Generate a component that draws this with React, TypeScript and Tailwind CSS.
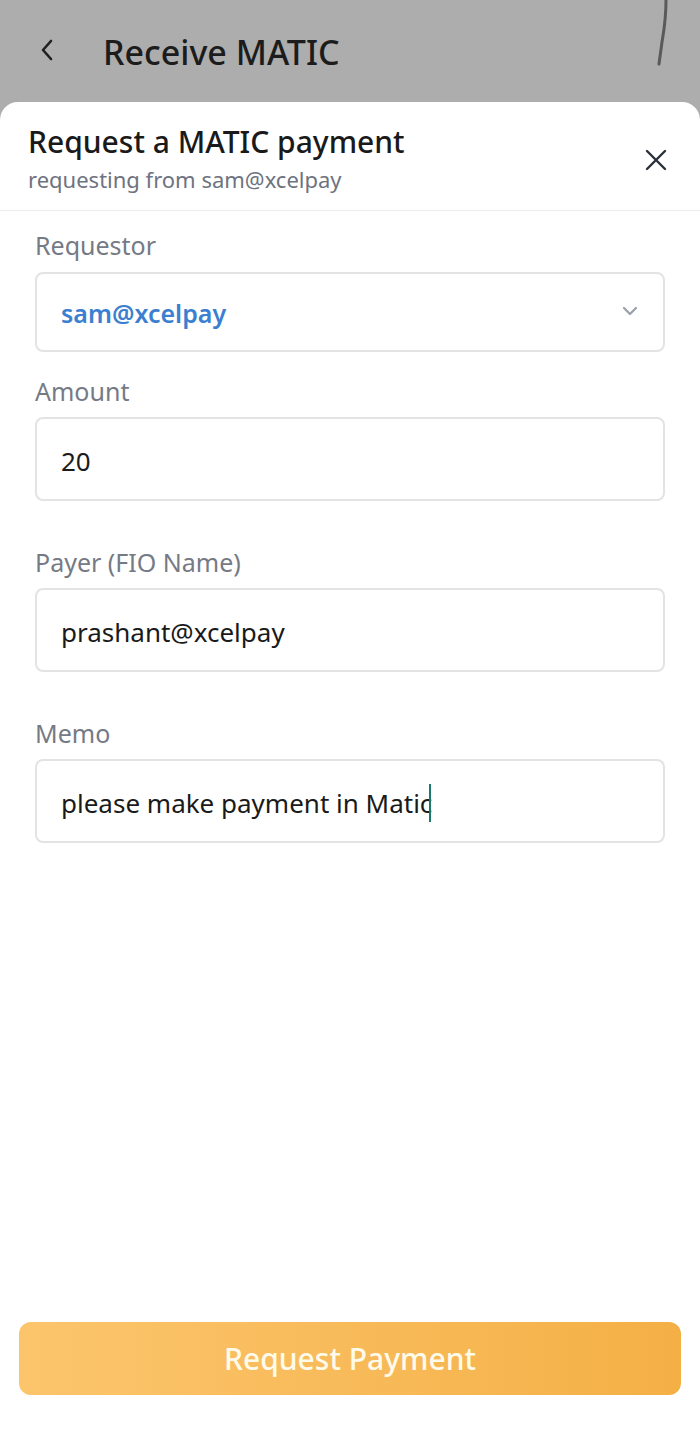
import React from 'react'

const fields = [
  { label: 'Amount', value: '20', mt: 'mt-[36px]' },
  { label: 'Payer (FIO Name)', value: 'prashant@xcelpay', mt: 'mt-[58px]' },
  { label: 'Memo', value: 'please make payment in Matic', mt: 'mt-[58px]', caret: true },
]

const App = () => {
  return (
    <div className="w-[700px] h-[1439px] bg-[#adadad] flex flex-col" style={{ fontFamily: '"Noto Sans", Lato, sans-serif' }}>
      {/* dimmed page behind the sheet */}
      <div className="h-[102px] flex items-center px-9 relative shrink-0">
        <svg width="22" height="30" viewBox="0 0 22 30" className="mt-[-2px]">
          <path d="M15 6 L7 15 L15 24" fill="none" stroke="#1f1f1f" strokeWidth="2.6" strokeLinecap="round" strokeLinejoin="round" />
        </svg>
        <h1 className="ml-[45px] text-[34px] font-medium text-[#1c1c1c] leading-[40px] mt-[2px]">Receive MATIC</h1>
        <svg width="20" height="70" viewBox="0 0 20 70" className="absolute right-[28px] top-0">
          <path d="M14 0 C14 20 12 30 10 42 C9 50 8 56 7 64" fill="none" stroke="#5a5a5a" strokeWidth="3" strokeLinecap="round" />
        </svg>
      </div>

      {/* bottom sheet */}
      <div className="flex-1 bg-white rounded-t-[18px] flex flex-col">
        <div className="flex items-start justify-between pl-7 pr-8 pt-[22px] pb-[17px] border-b border-[#ececec]">
          <div>
            <h2 className="text-[30px] font-medium text-[#1a1a1a] leading-[36px]">Request a MATIC payment</h2>
            <p className="text-[22px] text-[#6e7380] leading-[28px] mt-[5px]">requesting from sam@xcelpay</p>
          </div>
          <svg width="24" height="24" viewBox="0 0 24 24" className="mt-[24px]">
            <path d="M3 3 L21 21 M21 3 L3 21" stroke="#2b2f3a" strokeWidth="2.4" strokeLinecap="round" />
          </svg>
        </div>

        <div className="px-[35px] pt-[19px] flex flex-col">
          <label className="text-[25px] text-[#757a85] leading-[30px]">Requestor</label>
          <div className="mt-[12px] h-[80px] border-2 border-[#e3e3e3] rounded-[8px] flex items-center justify-between pl-[24px] pr-[24px]">
            <span className="text-[25px] font-semibold text-[#3c7fd0] mt-[4px]">sam@xcelpay</span>
            <svg width="18" height="12" viewBox="0 0 18 12" className="mb-[2px]">
              <path d="M3 3 L9 9 L15 3" fill="none" stroke="#9aa0aa" strokeWidth="2.2" strokeLinecap="round" strokeLinejoin="round" />
            </svg>
          </div>

          {fields.map(f => (
            <div key={f.label} className={`${f.mt} flex flex-col`}>
              <label className="text-[25px] text-[#757a85] leading-[30px] -mt-[12px]">{f.label}</label>
              <div className="mt-[11px] h-[84px] border-2 border-[#e3e3e3] rounded-[8px] flex items-center pl-[24px]">
                <span className="text-[26px] text-[#1a1a1a] mt-[4px]">{f.value}</span>
                {f.caret && <span className="w-[2px] h-[38px] bg-[#1b7a6e] -ml-[3px] mt-[4px]" />}
              </div>
            </div>
          ))}
        </div>

        <div className="mt-auto px-[19px] pb-[44px]">
          <button className="w-full h-[73px] rounded-[12px] bg-gradient-to-r from-[#fcc56c] to-[#f4b045] text-[#fffbea] text-[30px] font-medium">
            Request Payment
          </button>
        </div>
      </div>
    </div>
  )
}

export default App
